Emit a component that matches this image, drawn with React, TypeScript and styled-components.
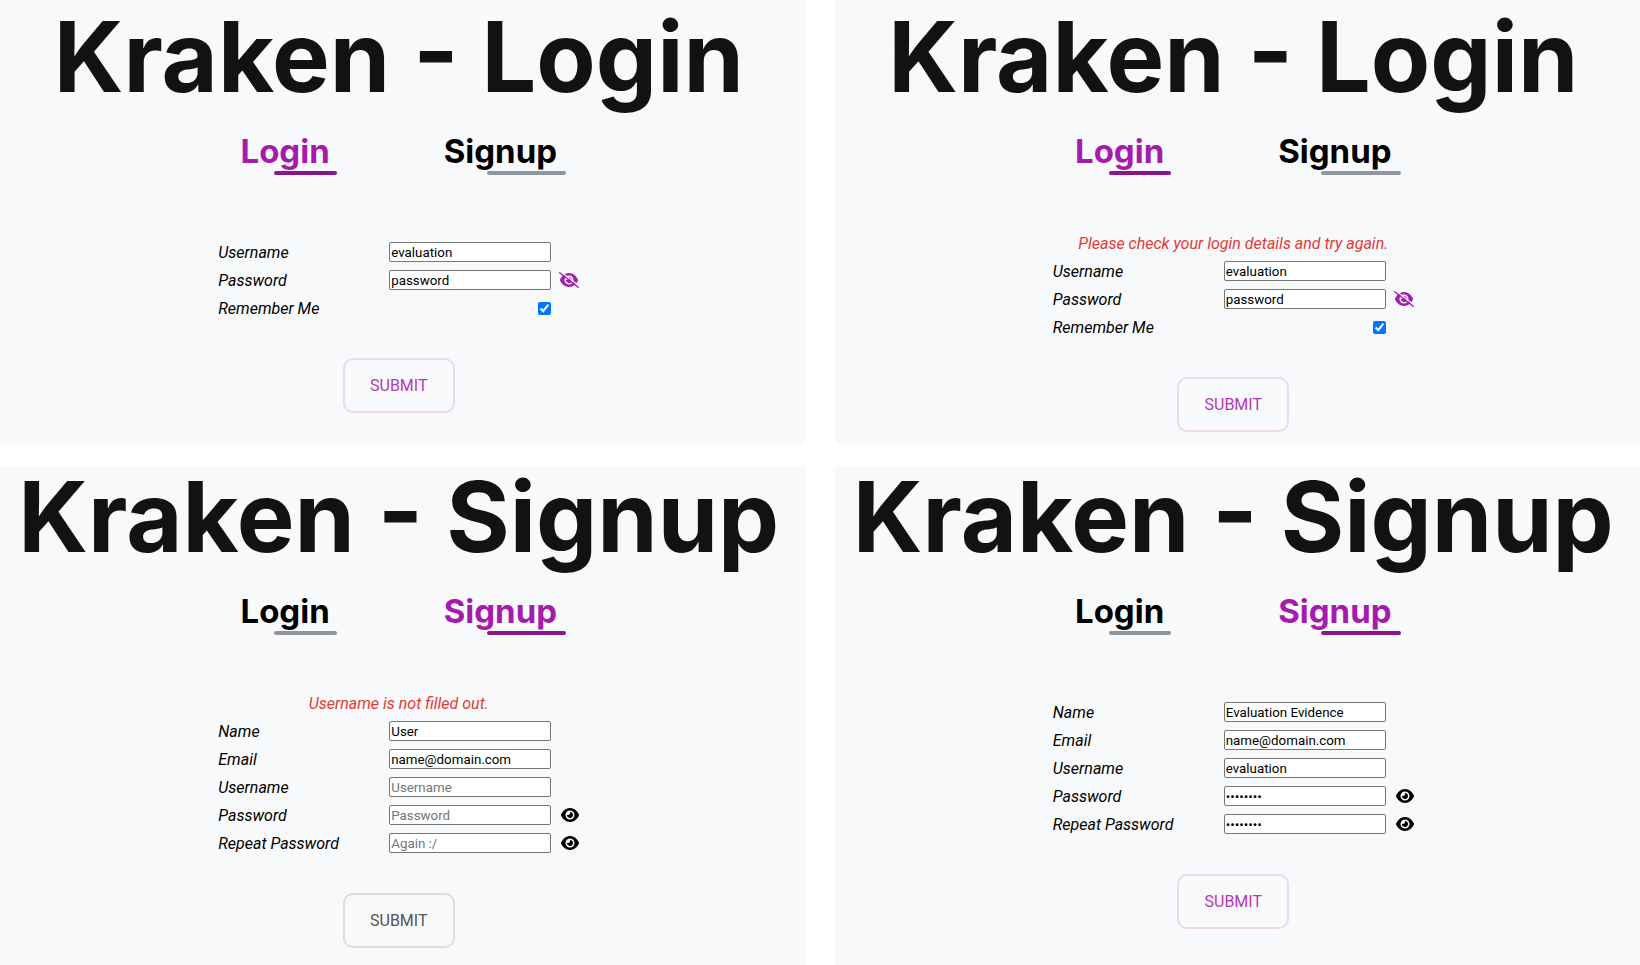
import React, { useId } from "react";
import styled, { createGlobalStyle } from "styled-components";
import { FaEye } from "react-icons/fa6";

const GlobalStyle = createGlobalStyle`
  *, *::before, *::after { box-sizing: border-box; }
  body { margin: 0; background: #fff; color: #000; font: 16px/19px Roboto, sans-serif; }
`;

const Board = styled.main`
  display: grid;
  grid-template-columns: repeat(2, minmax(0, 1fr));
  grid-template-rows: auto 1fr;
  gap: 22px 29px;
  min-height: 100vh;
`;

const Panel = styled.section<{ $inset: number }>`
  display: flex;
  flex-direction: column;
  align-items: center;
  padding: ${(p) => p.$inset}px 8px 12px 0;
  background: #f8f9fb;
`;

const Title = styled.h1`
  margin: 0;
  color: #121212;
  font: 700 97px/100px Inter, sans-serif;
  white-space: nowrap;
`;

const Tabs = styled.nav`
  display: flex;
  gap: 114px;
  margin-top: 24px;
`;

const Tab = styled.a<{ $active: boolean }>`
  color: ${(p) => (p.$active ? "#a61bae" : "#000")};
  font: 700 33px/40px Inter, sans-serif;
  text-decoration: none;

  &::after {
    content: "";
    display: block;
    width: 70%;
    height: 4px;
    margin-left: 38%;
    border-radius: 2px;
    background: ${(p) => (p.$active ? "#8a168f" : "#8e979f")};
  }
`;

const Form = styled.form<{ $offset: number }>`
  display: flex;
  flex-direction: column;
  align-items: center;
  margin-top: ${(p) => p.$offset}px;
`;

const ErrorText = styled.p`
  margin: 0;
  color: #e53935;
  font-style: italic;
  line-height: 26px;
`;

const Row = styled.div`
  display: grid;
  grid-template-columns: 171px 162px 28px;
  align-items: center;
  height: 28px;
`;

const Label = styled.label`
  font-style: italic;
`;

const Field = styled.input`
  width: 100%;
  height: 20px;
  padding: 1px;
  border: 1px solid #767676;
  border-radius: 2px;
  background: #fff;
  color: #000;
  font-family: Roboto, sans-serif;
  &::placeholder { color: #757575; }
`;

const Check = styled.input`
  justify-self: end;
  width: 13px;
  height: 13px;
  margin: 0;
`;

const Reveal = styled.button<{ $on: boolean }>`
  display: flex;
  justify-content: flex-end;
  padding: 0;
  border: 0;
  background: none;
  color: ${(p) => (p.$on ? "#a61bae" : "#000")};
  cursor: pointer;
  svg { width: ${(p) => (p.$on ? 20 : 18)}px; height: 16px; }
`;

const Submit = styled.button<{ $enabled: boolean }>`
  width: 112px;
  height: 55px;
  margin-top: 36px;
  border: 2px solid ${(p) => (p.$enabled ? "#edd8f0" : "#dcdddf")};
  border-radius: 10px;
  background: transparent;
  color: ${(p) => (p.$enabled ? "#b13ab9" : "#555")};
  font: 400 16px/19px Roboto, sans-serif;
`;

/* Open eye crossed by a diagonal bar, with a clear gap above the bar. */
function CrossedEye() {
  return (
    <svg viewBox="0 0 640 512" aria-hidden="true">
      <path
        transform="translate(32 0)"
        fill="currentColor"
        d="M288 32c-80.8 0-145.5 36.8-192.6 80.6C48.6 156 17.3 208 2.5 243.7c-3.3 7.9-3.3 16.7 0 24.6C17.3 304 48.6 356 95.4 399.4C142.5 443.2 207.2 480 288 480s145.5-36.8 192.6-80.6c46.8-43.5 78.1-95.4 93-131.1c3.3-7.9 3.3-16.7 0-24.6c-14.9-35.7-46.2-87.7-93-131.1C433.5 68.8 368.8 32 288 32zM144 256a144 144 0 1 1 288 0 144 144 0 1 1 -288 0zm144-64c0 35.3-28.7 64-64 64c-7.1 0-13.9-1.2-20.3-3.3c-5.5-1.8-11.9 1.6-11.7 7.4c.3 6.9 1.3 13.8 3.2 20.7c13.7 51.2 66.4 81.6 117.6 67.9s81.6-66.4 67.9-117.6c-11.1-41.5-47.8-69.4-88.6-71.1c-5.8-.2-9.2 6.1-7.4 11.7c2.1 6.4 3.3 13.2 3.3 20.3z"
      />
      <path d="M50 -12 L640 450" stroke="#f8f9fb" strokeWidth="40" />
      <path d="M24 24 L616 488" stroke="currentColor" strokeWidth="44" strokeLinecap="round" />
    </svg>
  );
}

type FieldData = {
  label: string;
  type?: string;
  value?: string;
  hint?: string;
  toggle?: "shown" | "hidden";
};

function FieldRow({ label, type = "text", value, hint, toggle }: FieldData) {
  const id = useId();
  return (
    <Row>
      <Label htmlFor={id}>{label}</Label>
      {type === "checkbox" ? (
        <Check id={id} type="checkbox" defaultChecked />
      ) : (
        <Field id={id} type={type} defaultValue={value} placeholder={hint} />
      )}
      {toggle && (
        <Reveal
          type="button"
          $on={toggle === "shown"}
          aria-label={toggle === "shown" ? "Hide password" : "Show password"}
        >
          {toggle === "shown" ? <CrossedEye /> : <FaEye />}
        </Reveal>
      )}
    </Row>
  );
}

type ScreenData = {
  page: "Login" | "Signup";
  fields: FieldData[];
  error?: string;
  enabled?: boolean;
};

function Screen({ page, fields, error, enabled = true }: ScreenData) {
  return (
    <Panel $inset={page === "Login" ? 7 : 1}>
      <Title>Kraken - {page}</Title>
      <Tabs>
        <Tab href="#login" $active={page === "Login"}>Login</Tab>
        <Tab href="#signup" $active={page === "Signup"}>Signup</Tab>
      </Tabs>
      <Form $offset={error ? 56 : 63} onSubmit={(e) => e.preventDefault()}>
        {error && <ErrorText>{error}</ErrorText>}
        {fields.map((f) => (
          <FieldRow key={f.label} {...f} />
        ))}
        <Submit type="submit" $enabled={enabled}>SUBMIT</Submit>
      </Form>
    </Panel>
  );
}

const loginFields: FieldData[] = [
  { label: "Username", value: "evaluation" },
  { label: "Password", value: "password", toggle: "shown" },
  { label: "Remember Me", type: "checkbox" },
];

const emptySignup: FieldData[] = [
  { label: "Name", value: "User" },
  { label: "Email", type: "email", value: "name@domain.com" },
  { label: "Username", hint: "Username" },
  { label: "Password", type: "password", hint: "Password", toggle: "hidden" },
  { label: "Repeat Password", type: "password", hint: "Again :/", toggle: "hidden" },
];

const filledSignup: FieldData[] = [
  { label: "Name", value: "Evaluation Evidence" },
  { label: "Email", type: "email", value: "name@domain.com" },
  { label: "Username", value: "evaluation" },
  { label: "Password", type: "password", value: "password", toggle: "hidden" },
  { label: "Repeat Password", type: "password", value: "password", toggle: "hidden" },
];

export default function App() {
  return (
    <>
      <GlobalStyle />
      <Board>
        <Screen page="Login" fields={loginFields} />
        <Screen page="Login" fields={loginFields} error="Please check your login details and try again." />
        <Screen page="Signup" fields={emptySignup} error="Username is not filled out." enabled={false} />
        <Screen page="Signup" fields={filledSignup} />
      </Board>
    </>
  );
}
